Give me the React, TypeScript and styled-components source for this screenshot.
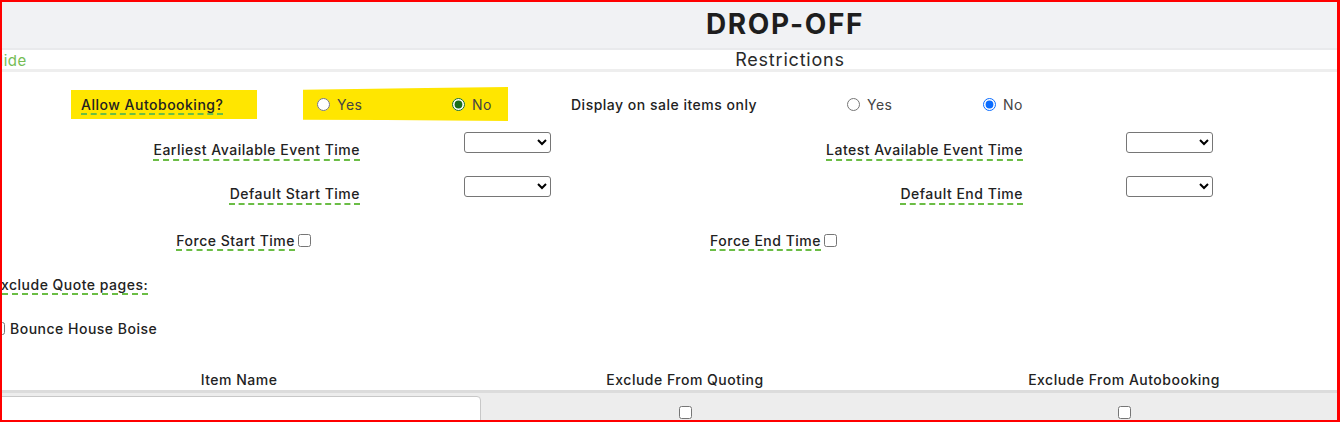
import React from "react";
import styled, { createGlobalStyle } from "styled-components";

const GlobalStyle = createGlobalStyle`
  html, body {
    margin: 0;
    padding: 0;
    background: #fff;
  }
  body {
    font-family: Inter, "Open Sans", "DejaVu Sans", sans-serif;
    color: #222;
    font-size: 14px;
    letter-spacing: 0.5px;
  }
  input, select {
    font-family: inherit;
  }
`;

const Frame = styled.div`
  box-sizing: border-box;
  width: 1340px;
  height: 422px;
  border: 2px solid #ff0000;
  border-right-width: 3px;
  overflow: hidden;
`;

const Page = styled.div`
  width: 1590px;
  margin-left: -12px;
`;

const Header = styled.div`
  box-sizing: border-box;
  height: 48px;
  background: #f1f2f4;
  border-bottom: 2px solid #e9eaec;
  display: flex;
  align-items: center;
  justify-content: center;
  padding-bottom: 2px;
`;

const Title = styled.h1`
  margin: 0;
  font-size: 28px;
  font-weight: 700;
  letter-spacing: 1.6px;
  color: #1e1e1e;
`;

const SubBar = styled.div`
  position: relative;
  height: 19px;
  border-bottom: 3px solid #eeeeee;
  display: flex;
  align-items: center;
  justify-content: center;
`;

const HideLink = styled.a`
  position: absolute;
  left: 2px;
  top: 1px;
  font-size: 15px;
  color: #76bd55;
  text-decoration: none;
`;

const SubTitle = styled.div`
  font-size: 18px;
  letter-spacing: 0.8px;
  color: #2a2a2a;
  padding-left: 10px;
`;

const Form = styled.div`
  padding-left: 2px;
  padding-top: 14px;
`;

const Row = styled.div<{ $h: number; $align?: string; $pt?: number }>`
  box-sizing: border-box;
  display: flex;
  align-items: ${(p) => p.$align || "center"};
  height: ${(p) => p.$h}px;
  padding-top: ${(p) => p.$pt || 0}px;
`;

const Spell = styled.span`
  text-decoration: underline dashed #6bbd45;
  text-decoration-thickness: 2px;
  text-underline-offset: 4px;
`;

const Marked = styled.div`
  box-sizing: border-box;
  margin-left: 79px;
  width: 186px;
  height: 29px;
  padding-left: 10px;
  background: #ffe600;
  display: flex;
  align-items: center;
  font-weight: 500;
`;

const RadioGroup = styled.div<{ $marked?: boolean; $ml: number }>`
  box-sizing: border-box;
  display: flex;
  align-items: center;
  margin-left: ${(p) => p.$ml}px;
  height: 34px;
  padding-left: 14px;
  width: ${(p) => (p.$marked ? "205px" : "auto")};
  background: ${(p) => (p.$marked ? "#ffe600" : "transparent")};
  clip-path: ${(p) =>
    p.$marked ? "polygon(0 8%, 60% 3%, 100% 0, 100% 100%, 40% 97%, 0 96%)" : "none"};
`;

const Option = styled.label<{ $w?: number }>`
  display: flex;
  align-items: center;
  gap: 7px;
  width: ${(p) => (p.$w ? `${p.$w}px` : "auto")};
  color: #444;
  font-size: 14px;
`;

const Radio = styled.input<{ $tint: string }>`
  margin: 0;
  width: 13px;
  height: 13px;
  accent-color: ${(p) => p.$tint};
`;

const Caption = styled.div<{ $ml?: number; $w?: number }>`
  margin-left: ${(p) => p.$ml || 0}px;
  width: ${(p) => (p.$w ? `${p.$w}px` : "auto")};
  font-weight: 500;
`;

const FieldLabel = styled.div<{ $w: number }>`
  box-sizing: border-box;
  width: ${(p) => p.$w}px;
  text-align: right;
  font-weight: 500;
  margin-top: 10px;
  line-height: 16px;
`;

const Select = styled.select<{ $ml: number }>`
  box-sizing: border-box;
  margin: 0 0 0 ${(p) => p.$ml}px;
  width: 87px;
  height: 21px;
  border: 1px solid #767676;
  border-radius: 3px;
  background: #fff;
`;

const CheckGroup = styled.div<{ $w: number }>`
  width: ${(p) => p.$w}px;
  display: flex;
  justify-content: flex-end;
  align-items: center;
  gap: 3px;
  font-weight: 500;
`;

const Check = styled.input`
  margin: 0;
  width: 13px;
  height: 13px;
`;

const PlainText = styled.div`
  font-weight: 500;
`;

const Bounce = styled.label`
  display: flex;
  align-items: center;
  gap: 5px;
  font-weight: 500;
`;

const Table = styled.div`
  display: grid;
  grid-template-columns: 494px 398px 480px;
`;

const HeadCell = styled.div`
  box-sizing: border-box;
  height: 35px;
  padding-top: 13px;
  line-height: 18px;
  text-align: center;
  font-weight: 500;
  border-bottom: 3px solid #dcdcdc;
`;

const BodyCell = styled.div<{ $center?: boolean }>`
  box-sizing: border-box;
  background: #ededed;
  height: 40px;
  display: flex;
  justify-content: center;
  align-items: flex-start;
  padding-top: ${(p) => (p.$center ? "13px" : "3px")};
  padding-right: ${(p) => (p.$center ? "0" : "5px")};
`;

const TextInput = styled.input`
  box-sizing: border-box;
  width: 100%;
  height: 36px;
  border: 1px solid #c8c8c8;
  border-radius: 4px;
  background: #fff;
  margin: 0;
`;

export default function App() {
  return (
    <>
      <GlobalStyle />
      <Frame>
        <Page>
          <Header>
            <Title>DROP-OFF</Title>
          </Header>
          <SubBar>
            <HideLink>Hide</HideLink>
            <SubTitle>Restrictions</SubTitle>
          </SubBar>
          <Form>
            <Row $h={36}>
              <Marked>
                <Spell>Allow Autobooking?</Spell>
              </Marked>
              <RadioGroup $marked $ml={46}>
                <Option $w={135}>
                  <Radio type="radio" name="auto" $tint="#1a6e1a" />
                  Yes
                </Option>
                <Option>
                  <Radio type="radio" name="auto" defaultChecked $tint="#1a6e1a" />
                  No
                </Option>
              </RadioGroup>
              <Caption $ml={63} $w={262}>
                Display on sale items only
              </Caption>
              <RadioGroup $ml={0}>
                <Option $w={136}>
                  <Radio type="radio" name="sale" $tint="#0a6cff" />
                  Yes
                </Option>
                <Option>
                  <Radio type="radio" name="sale" defaultChecked $tint="#0a6cff" />
                  No
                </Option>
              </RadioGroup>
            </Row>
            <Row $h={44} $pt={10} $align="flex-start">
              <FieldLabel $w={368}>
                <Spell>Earliest Available Event Time</Spell>
              </FieldLabel>
              <Select $ml={104} />
              <FieldLabel $w={472}>
                <Spell>Latest Available Event Time</Spell>
              </FieldLabel>
              <Select $ml={103} />
            </Row>
            <Row $h={44} $pt={10} $align="flex-start">
              <FieldLabel $w={368}>
                <Spell>Default Start Time</Spell>
              </FieldLabel>
              <Select $ml={104} />
              <FieldLabel $w={472}>
                <Spell>Default End Time</Spell>
              </FieldLabel>
              <Select $ml={103} />
            </Row>
            <Row $h={60}>
              <CheckGroup $w={319}>
                <Spell>Force Start Time</Spell>
                <Check type="checkbox" />
              </CheckGroup>
              <CheckGroup $w={526}>
                <Spell>Force End Time</Spell>
                <Check type="checkbox" />
              </CheckGroup>
            </Row>
            <Row $h={28}>
              <PlainText>
                <Spell>Exclude Quote pages:</Spell>
              </PlainText>
            </Row>
            <Row $h={60}>
              <Bounce>
                <Check type="checkbox" />
                Bounce House Boise
              </Bounce>
            </Row>
            <Table>
              <HeadCell>Item Name</HeadCell>
              <HeadCell>Exclude From Quoting</HeadCell>
              <HeadCell>Exclude From Autobooking</HeadCell>
              <BodyCell>
                <TextInput type="text" />
              </BodyCell>
              <BodyCell $center>
                <Check type="checkbox" />
              </BodyCell>
              <BodyCell $center>
                <Check type="checkbox" />
              </BodyCell>
            </Table>
          </Form>
        </Page>
      </Frame>
    </>
  );
}
